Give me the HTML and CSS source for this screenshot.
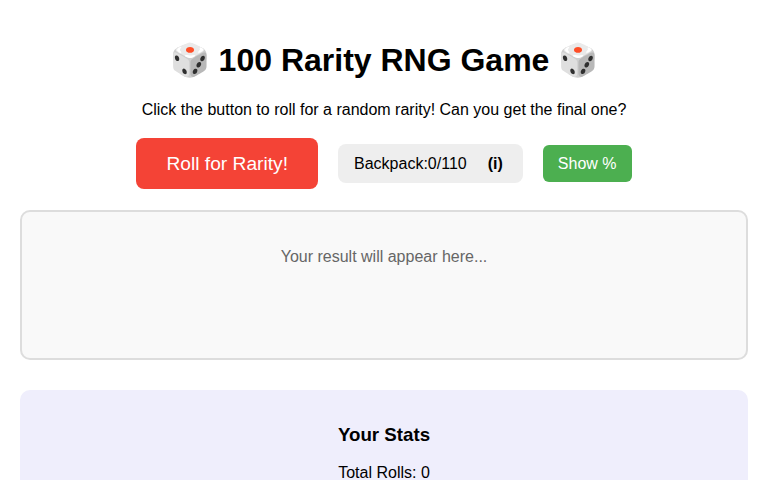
FILE: index.html
```html
<!DOCTYPE html>
<html lang="en">
<head>
<meta charset="utf-8">
<title>100 Rarity RNG Game</title>
<link rel="stylesheet" href="styles.css">
</head>
<body>
  <h1 class="title">🎲 100 Rarity RNG Game 🎲</h1>
  <p class="intro">Click the button to roll for a random rarity! Can you get the final one?</p>
  <div class="controls">
    <button class="roll-btn">Roll for Rarity!</button>
    <div class="backpack">Backpack:0/110<span class="info">(i)</span></div>
    <button class="show-btn">Show %</button>
  </div>
  <div class="result">
    <p class="result-text">Your result will appear here...</p>
  </div>
  <div class="stats">
    <h3 class="stats-title">Your Stats</h3>
    <p class="stats-line">Total Rolls: 0</p>
  </div>
</body>
</html>
```
FILE: styles.css
```css
html, body {
  margin: 0;
  background: #ffffff;
}
body {
  padding: 20px;
  font-family: "Liberation Sans", Arial, sans-serif;
  color: #000;
  text-align: center;
}
.title {
  font-size: 32px;
  font-weight: bold;
  margin: 21.44px 0;
}
.intro {
  font-size: 16px;
  margin: 16px 0 0;
}
.controls {
  display: flex;
  justify-content: center;
  align-items: center;
  gap: 20px;
  margin: 19px 0 21px;
}
.roll-btn {
  font-family: inherit;
  font-size: 19.2px;
  line-height: 21px;
  padding: 15px 30px;
  background: #f44336;
  color: #fff;
  border: none;
  border-radius: 8px;
}
.backpack {
  font-size: 16px;
  line-height: 19px;
  padding: 10px 20px 10px 16px;
  background: #eeeeee;
  border-radius: 8px;
}
.info {
  font-weight: bold;
  margin-left: 21px;
}
.show-btn {
  font-family: inherit;
  font-size: 16px;
  line-height: 17px;
  padding: 10px 15px;
  background: #4caf50;
  color: #fff;
  border: none;
  border-radius: 6px;
}
.result {
  box-sizing: border-box;
  min-height: 150px;
  padding: 20px;
  background: #f9f9f9;
  border: 2px solid #dddddd;
  border-radius: 10px;
  overflow: hidden;
}
.result-text {
  margin: 16px 0;
  font-size: 16px;
  color: #666666;
}
.stats {
  margin-top: 30px;
  padding: 15px;
  background: #efeefc;
  border-radius: 10px;
}
.stats-title {
  font-size: 18.72px;
  margin: 18.72px 0;
}
.stats-line {
  font-size: 16px;
  margin: 16px 0;
}
```
